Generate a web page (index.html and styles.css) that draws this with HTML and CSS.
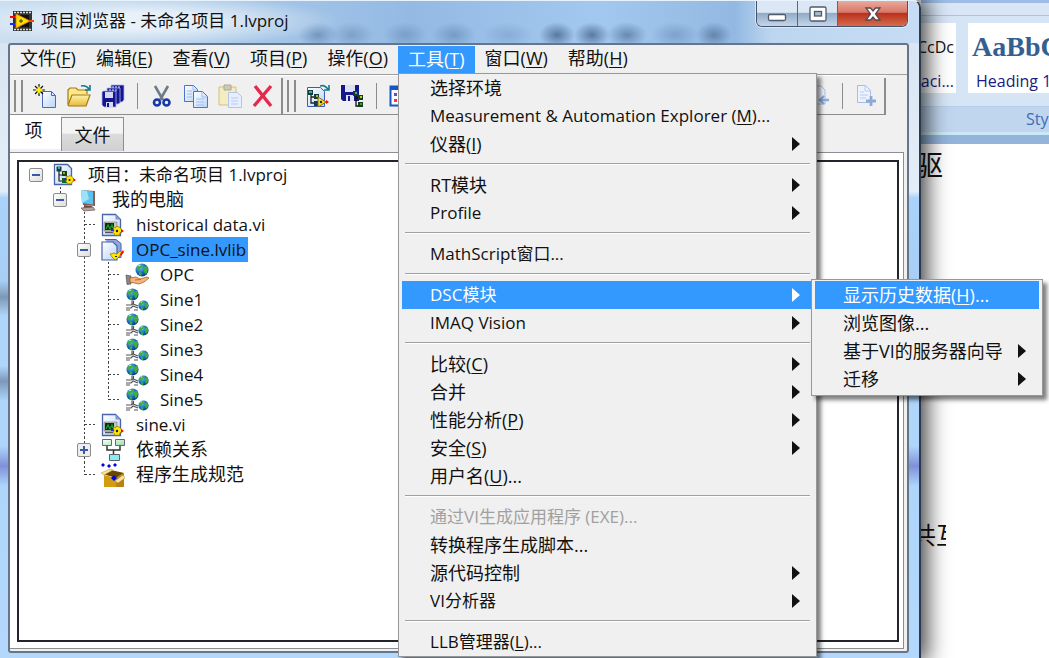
FILE: index.html
```html
<!DOCTYPE html>
<html lang="zh-CN">
<head>
<meta charset="utf-8">
<title>项目浏览器 - 未命名项目 1.lvproj</title>
<link rel="stylesheet" href="styles.css">
</head>
<body>
<svg class="defs" aria-hidden="true">
  <defs>
    <linearGradient id="page" x1="0" y1="0" x2="1" y2="1"><stop offset="0" stop-color="#fff"/><stop offset="1" stop-color="#b9d4f8"/></linearGradient>
    <linearGradient id="gold" x1="0" y1="0" x2="0" y2="1"><stop offset="0" stop-color="#fff3a8"/><stop offset="1" stop-color="#e8b83a"/></linearGradient>
    <radialGradient id="sea" cx=".35" cy=".3" r=".8"><stop offset="0" stop-color="#6cc4ee"/><stop offset=".6" stop-color="#0d62b4"/><stop offset="1" stop-color="#06336f"/></radialGradient>
    <linearGradient id="mint" x1="0" y1="0" x2="1" y2="1"><stop offset="0" stop-color="#fff"/><stop offset="1" stop-color="#8fe0a8"/></linearGradient>
    <symbol id="gear" viewBox="0 0 13 10"><path d="M0 3h3v2H0z" fill="#22f"/><path d="M2 1l3 .5L6 0l2 1 2 1.500 1 2.500-2 2-1 2.500-2-.5-2 .5-1-2-1-1 1-2z" fill="#ffe600" stroke="#8a7000" stroke-width=".7"/><circle cx="6" cy="5" r="1.200" fill="#222"/><path d="M10 3l3 2-3 2z" fill="#f00"/></symbol>
    <symbol id="globe" viewBox="0 0 14 14"><circle cx="7" cy="7" r="6.500" fill="url(#sea)"/><path d="M3 3l3-1.500 2 1-1 2-2 1v2L3 7 1.500 5zM9 4l3-1 1 3-1 4-2 1-1-3-1-2zM4 9l3 1-1 3-2-1z" fill="#3fae3d"/><path d="M3 2.500l2-1 1 1-2 1z" fill="#b8f0c0"/></symbol>
    <symbol id="sheet" viewBox="0 0 24 24"><path d="M3 2h13l5 5v16H3z" fill="url(#page)" stroke="#4a62a8" stroke-width="1.300"/><path d="M16 2v5h5z" fill="#dfeaff" stroke="#4a62a8"/></symbol>
    <symbol id="i-vi" viewBox="0 0 24 24"><path d="M1.500 1.500h13l5 5v16h-18z" fill="url(#page)" stroke="#4a62a8" stroke-width="1.300"/><path d="M14.500 1.500v5h5z" fill="#7f97d6"/><path d="M3 9h13v9H3z" fill="#c4c4c4" stroke="#777" stroke-width=".6"/><path d="M4 10h9v7H4z" fill="#031"/><path d="M5 16l2-4 2 4 2-4 1 3" fill="none" stroke="#1c9a2c" stroke-width="1.300"/><path d="M4 19.500h8" stroke="#555" stroke-width="1.500"/><use href="#gear" x="10" y="13" width="13" height="10"/></symbol>
    <symbol id="i-proj" viewBox="0 0 24 24"><path d="M1.500 1.500h13l4 4v16h-17z" fill="url(#page)" stroke="#4a62a8" stroke-width="1.300"/><path d="M6 7v11h5M6 12h4" fill="none" stroke="#222" stroke-width="1.200"/><path d="M3.500 3.500h5v5h-5z" fill="#163c3c"/><path d="M5 4h2v2H5z" fill="#29b6b6"/><path d="M9 8h5v5H9z" fill="#243c14"/><path d="M10 9h2v2h-2z" fill="#7ab32c"/><path d="M9 15h5v5H9z" fill="#162"/><use href="#gear" x="11" y="12" width="12" height="10"/></symbol>
    <symbol id="i-lib" viewBox="0 0 24 24"><path d="M4 1.500h11l5 4v14h-3" fill="#8fa5dc" stroke="#4a62a8"/><path d="M1 4h11l4 4v14H1z" fill="url(#page)" stroke="#4a62a8" stroke-width="1.200"/><path d="M9 16l4-1 3 1 3-3 2 2-4 5-3 2-3-3z" fill="#ffe600" stroke="#8a7000" stroke-width=".7"/><path d="M19 16l3-4 1 2-3 4z" fill="#f00"/><path d="M14 18h2v1h-2z" fill="#222"/></symbol>
    <symbol id="i-pc" viewBox="0 0 24 24"><path d="M4 2l14 1v15L6 17z" fill="#8a5d50"/><path d="M4 2l12 1.500v13L5 15z" fill="#57c3ee"/><path d="M4 2l6 1 2 8-7 4z" fill="#9ce2fa"/><path d="M7 17l8 1v2H7z" fill="#704a44"/><path d="M4 20l12-1 2 3-11 1z" fill="#b4a5a0" stroke="#6c5650" stroke-width=".7"/></symbol>
    <symbol id="i-hand" viewBox="0 0 24 24"><use href="#globe" x="10" y="0" width="14" height="14"/><path d="M1 12l5 1v8l-4 .5z" fill="#888" stroke="#444" stroke-width=".6"/><path d="M5 15l6-1 4 2 7-2 2 1-5 4-5 2-9-2z" fill="#f3b67e" stroke="#a85d22" stroke-width=".8"/><path d="M10 17l6-.5" stroke="#a85d22" stroke-width=".8"/></symbol>
    <symbol id="i-var" viewBox="0 0 24 24"><use href="#globe" x="1" y="0" width="13" height="13"/><path d="M7 13v3M8.500 13v3M1 17h5l2-1 5 2M1 20h5l2-2 5 2M1 22h4M9 22h4" fill="none" stroke="#555" stroke-width="1.200"/><use href="#globe" x="13" y="12" width="11" height="11"/></symbol>
    <symbol id="i-deps" viewBox="0 0 24 24"><path d="M6 8v4h13V8M12.500 12v4" fill="none" stroke="#333" stroke-width="1.500"/><path d="M1.500 1.500h9v6h-9zM14.500 1.500h9v6h-9z" fill="url(#mint)" stroke="#667"/><path d="M8.500 16.500h10v6h-10z" fill="#8cebf5" stroke="#566"/></symbol>
    <symbol id="i-build" viewBox="0 0 24 24"><path d="M2 11l8-4 13 3-8 5z" fill="#6b4800"/><path d="M3 12l12 3v9H3z" fill="#d29b16"/><path d="M15 15l8-5v14h-8z" fill="#b98210"/><path d="M0 10l9-4 3 1-9 5zM14 18l8-6 2 3-7 5z" fill="#fbe6a0" stroke="#b58a2a" stroke-width=".5"/><path d="M2 0l2 2-2 2-2-2zM8 1l2 2-2 2-2-2zM14 0l2 2-2 2-2-2zM13 12l3 3-3 3-3-3z" fill="#00e"/></symbol>
    <symbol id="i-new" viewBox="0 0 24 24"><path d="M9.500 7.500h9l4 4v12h-13z" fill="url(#page)" stroke="#4a6ac0"/><path d="M18.500 7.500v4h4" fill="none" stroke="#4a6ac0"/><path d="M6 0v12M0 6h12M2 2l8 8M10 2l-8 8" stroke="#111" stroke-width="1.200"/><path d="M6 2l1.500 2.500L10 6 7.500 7.500 6 10 4.500 7.500 2 6l2.500-1.500z" fill="#fff200"/></symbol>
    <symbol id="i-open" viewBox="0 0 24 24"><path d="M1 20V6l2-2h6l2 2h9v4" fill="#ffe88a" stroke="#a47a10" stroke-width="1.200"/><path d="M1 21l4-10h18l-4 11H2z" fill="url(#gold)" stroke="#a47a10" stroke-width="1.200"/><path d="M14 2c4-1 6 0 8 3M23 1v5h-5" fill="none" stroke="#147a8a" stroke-width="1.600"/></symbol>
    <symbol id="i-saveall" viewBox="0 0 24 24"><g stroke="#aab6ff" stroke-width=".8"><path d="M10 1h13v15l-2 2H10z" fill="#15158c"/><path d="M6 4h13v15l-2 1H6z" fill="#15158c"/><path d="M2 7h13v16H3l-2-2V8z" fill="#15158c"/></g><path d="M4 8h8v6H4zM5 18h7v5H5z" fill="#d3d9f2"/><path d="M6 19h2v4H6z" fill="#15158c"/><path d="M12 2v2M15 2v2M18 2v2M9 5v2M12 5v2M15 5v2" stroke="#dce2ff"/></symbol>
    <symbol id="i-cut" viewBox="0 0 24 24"><path d="M5 2l8 14M18 2l-8 14" stroke="#6f7b89" stroke-width="2.600"/><circle cx="7" cy="18.500" r="3" fill="none" stroke="#1738a8" stroke-width="2.600"/><circle cx="16.500" cy="18.500" r="3" fill="none" stroke="#1738a8" stroke-width="2.600"/></symbol>
    <symbol id="i-copy" viewBox="0 0 24 24"><g fill="url(#page)" stroke="#4a75cc"><path d="M.5 1.500h9l4 4v12H.5z"/><path d="M9.500 7.500h9l5 5v11h-14z"/></g><path d="M9 2v4h4M18 8v5h5M3 7h5M3 10h5M3 13h5M12 15h8M12 18h8M12 21h8" fill="none" stroke="#a2c0ee"/></symbol>
    <symbol id="i-paste" viewBox="0 0 24 24"><path d="M1 3h17v18H1z" fill="#f5edc2" stroke="#d4bf7c"/><path d="M6 1h7v5H6z" fill="#cfcab8" stroke="#aaa794"/><path d="M10.500 8.500h9l4 4v11h-13z" fill="#e5efff" stroke="#b5c4e4"/><path d="M13 14h7M13 17h7M13 20h7" stroke="#bccbe8"/></symbol>
    <symbol id="i-del" viewBox="0 0 24 24"><path d="M3 2l16 20M19 2L2 22" stroke="#e8284b" stroke-width="3.400"/></symbol>
    <symbol id="i-projgo" viewBox="0 0 24 24"><path d="M1.500 3.500h13l4 4v15h-17z" fill="url(#page)" stroke="#3c5bb8"/><path d="M5 8v11h6M5 13h5" fill="none" stroke="#222" stroke-width="1.300"/><path d="M2 6h5v5H2zM8 10h5v5H8zM8 17h5v5H8z" fill="#163c3c"/><path d="M3 7h3v2H3z" fill="#29b6b6"/><path d="M10 11h2v2h-2z" fill="#ab3"/><path d="M12 13l8 5-8 5z" fill="#ffe600" stroke="#765"/><circle cx="15" cy="18" r="1.200" fill="#222"/><path d="M20 16l3 2-3 2z" fill="#f00"/><path d="M14 2c4-1 5 0 8 3M23 1v5h-5" fill="none" stroke="#147a8a" stroke-width="1.600"/></symbol>
    <symbol id="i-saveproj" viewBox="0 0 24 24"><path d="M1 1h18v16H3l-2-2z" fill="#15158c"/><path d="M5 1h10v7H5zM6 11h8v6H6z" fill="#dce0f0"/><path d="M8 12h2v5H8z" fill="#15158c"/><path d="M16 9v13h4M16 14h4" fill="none" stroke="#111" stroke-width="1.300"/><path d="M13 7h5v5h-5zM18 11h5v5h-5zM18 18h5v5h-5z" fill="#1b3a1b"/><path d="M15 8h2v2h-2z" fill="#2bb"/><path d="M20 12h2v2h-2z" fill="#bc3"/><path d="M20 19h2v2h-2z" fill="#2a3"/></symbol>
    <symbol id="i-props" viewBox="0 0 24 24"><path d="M1.500 2.500h20v19h-20z" fill="#fff" stroke="#1656c8" stroke-width="2"/><path d="M1 2h21v4H1z" fill="#1656c8"/><path d="M5 9h3v3H5z" fill="#65a"/><path d="M5 15h3v3H5z" fill="#f33"/></symbol>
    <symbol id="i-in" viewBox="0 0 24 24"><path d="M6 2h9l4 4v14H6z" fill="#eef3fc" stroke="#a9bde2"/><path d="M23 16h-9M18 12l-4 4 4 4" fill="none" stroke="#8aaada" stroke-width="2.400"/></symbol>
    <symbol id="i-add" viewBox="0 0 24 24"><path d="M2.500 1.500h8l5 5v12h-13z" fill="#edf3fd" stroke="#a9bde2"/><path d="M10 2v5h5M5 8h4M5 11h8M5 14h6" fill="none" stroke="#b8cbea"/><path d="M16 12v10M11 17h10" stroke="#8caad8" stroke-width="2.800"/></symbol>
  </defs>
</svg>

<main class="desktop">
  <section class="window">
    <header class="titlebar">
      <svg class="app-icon" viewBox="0 0 24 22" aria-hidden="true"><path d="M3 1h19v20H3z" fill="#333"/><path d="M4 2.500h17M4 19.500h17" stroke="#ddd" stroke-width="1.500" stroke-dasharray="2 1"/><path d="M5 5h14v12H5z" fill="#111"/><path d="M0 7h6" stroke="#f00" stroke-width="2"/><path d="M0 14h6" stroke="#22f" stroke-width="2"/><path d="M6 4l14 7-14 7z" fill="#ffe100" stroke="#e58b00"/><path d="M9 11h4M11 9v4" stroke="#333"/><path d="M19 11h5" stroke="#f40" stroke-width="2"/></svg>
      <h1>项目浏览器 - 未命名项目 1.lvproj</h1>
      <div class="caption-buttons">
        <button class="cap min" aria-label="最小化"><svg viewBox="0 0 20 18"><rect x="1.500" y="9.500" width="17" height="6" rx="1.500" fill="#fff" stroke="#4e5b6e" stroke-width="1.300"/></svg></button>
        <button class="cap max" aria-label="最大化"><svg viewBox="0 0 20 18"><rect x="2" y="2" width="16" height="14" rx="1.500" fill="#fff" stroke="#4e5b6e" stroke-width="1.300"/><rect x="6.500" y="6.500" width="7" height="4.500" fill="#a9bcd0" stroke="#4e5b6e" stroke-width="1.300"/></svg></button>
        <button class="cap close" aria-label="关闭"><svg viewBox="0 0 20 18"><path d="M3 3h4.500l2.500 3 2.500-3H17l-4.500 6 4.500 6h-4.500L10 12l-2.500 3H3l4.500-6z" fill="#fff" stroke="#5a4a50" stroke-width="1.300"/></svg></button>
      </div>
    </header>

    <div class="client">
      <nav class="menubar">
        <button>文件(<u>F</u>)</button>
        <button>编辑(<u>E</u>)</button>
        <button>查看(<u>V</u>)</button>
        <button>项目(<u>P</u>)</button>
        <button>操作(<u>O</u>)</button>
        <div class="menu-host">
          <button class="open" aria-expanded="true">工具(<u>T</u>)</button>
          <div class="menu tools" role="menu">
            <button role="menuitem">选择环境</button>
            <button role="menuitem" class="latin">Measurement &amp; Automation Explorer (<u>M</u>)...</button>
            <button role="menuitem" class="more">仪器(<u>I</u>)</button>
            <hr>
            <button role="menuitem" class="more">RT模块</button>
            <button role="menuitem" class="more latin">Profile</button>
            <hr>
            <button role="menuitem" class="latin">MathScript窗口...</button>
            <hr>
            <div class="sub-host">
              <button role="menuitem" class="more active latin" aria-expanded="true">DSC模块</button>
              <div class="menu sub" role="menu">
                <button role="menuitem" class="active">显示历史数据(<u>H</u>)...</button>
                <button role="menuitem">浏览图像...</button>
                <button role="menuitem" class="more">基于VI的服务器向导</button>
                <button role="menuitem" class="more">迁移</button>
              </div>
            </div>
            <button role="menuitem" class="more latin">IMAQ Vision</button>
            <hr>
            <button role="menuitem" class="more">比较(<u>C</u>)</button>
            <button role="menuitem" class="more">合并</button>
            <button role="menuitem" class="more">性能分析(<u>P</u>)</button>
            <button role="menuitem" class="more">安全(<u>S</u>)</button>
            <button role="menuitem">用户名(<u>U</u>)...</button>
            <hr>
            <button role="menuitem" class="latin" disabled>通过VI生成应用程序 (EXE)...</button>
            <button role="menuitem">转换程序生成脚本...</button>
            <button role="menuitem" class="more">源代码控制</button>
            <button role="menuitem" class="more latin">VI分析器</button>
            <hr>
            <button role="menuitem" class="latin">LLB管理器(<u>L</u>)...</button>
          </div>
        </div>
        <button>窗口(<u>W</u>)</button>
        <button>帮助(<u>H</u>)</button>
      </nav>

      <div class="toolbars">
        <div class="toolbar">
          <i class="grip"></i>
          <button aria-label="新建"><svg><use href="#i-new"/></svg></button>
          <button aria-label="打开"><svg><use href="#i-open"/></svg></button>
          <button aria-label="全部保存"><svg><use href="#i-saveall"/></svg></button>
          <i class="sep"></i>
          <button aria-label="剪切"><svg><use href="#i-cut"/></svg></button>
          <button aria-label="复制"><svg><use href="#i-copy"/></svg></button>
          <button aria-label="粘贴" disabled><svg><use href="#i-paste"/></svg></button>
          <button aria-label="删除"><svg><use href="#i-del"/></svg></button>
        </div>
        <div class="toolbar wide">
          <i class="grip"></i>
          <button aria-label="打开项目"><svg><use href="#i-projgo"/></svg></button>
          <button aria-label="保存项目"><svg><use href="#i-saveproj"/></svg></button>
          <i class="sep"></i>
          <button aria-label="属性"><svg><use href="#i-props"/></svg></button>
          <span class="spring"></span>
          <button aria-label="移入" disabled><svg><use href="#i-in"/></svg></button>
          <i class="sep"></i>
          <button aria-label="添加" disabled><svg><use href="#i-add"/></svg></button>
        </div>
      </div>

      <div class="tabs" role="tablist">
        <button class="tab current" role="tab" aria-selected="true">项</button>
        <button class="tab" role="tab" aria-selected="false">文件</button>
      </div>

      <div class="tabpage">
        <div class="tree">
          <ul>
            <li>
              <div class="node"><button class="twist" aria-label="折叠"></button><svg><use href="#i-proj"/></svg><span class="latin">项目：未命名项目 1.lvproj</span></div>
              <ul>
                <li>
                  <div class="node"><button class="twist" aria-label="折叠"></button><svg><use href="#i-pc"/></svg><span>我的电脑</span></div>
                  <ul>
                    <li><div class="node"><i class="leaf"></i><svg><use href="#i-vi"/></svg><span class="latin">historical data.vi</span></div></li>
                    <li>
                      <div class="node"><button class="twist" aria-label="折叠"></button><svg><use href="#i-lib"/></svg><span class="latin selected">OPC_sine.lvlib</span></div>
                      <ul>
                        <li><div class="node"><i class="leaf"></i><svg><use href="#i-hand"/></svg><span class="latin">OPC</span></div></li>
                        <li><div class="node"><i class="leaf"></i><svg><use href="#i-var"/></svg><span class="latin">Sine1</span></div></li>
                        <li><div class="node"><i class="leaf"></i><svg><use href="#i-var"/></svg><span class="latin">Sine2</span></div></li>
                        <li><div class="node"><i class="leaf"></i><svg><use href="#i-var"/></svg><span class="latin">Sine3</span></div></li>
                        <li><div class="node"><i class="leaf"></i><svg><use href="#i-var"/></svg><span class="latin">Sine4</span></div></li>
                        <li><div class="node"><i class="leaf"></i><svg><use href="#i-var"/></svg><span class="latin">Sine5</span></div></li>
                      </ul>
                    </li>
                    <li><div class="node"><i class="leaf"></i><svg><use href="#i-vi"/></svg><span class="latin">sine.vi</span></div></li>
                    <li><div class="node"><button class="twist plus" aria-label="展开"></button><svg><use href="#i-deps"/></svg><span>依赖关系</span></div></li>
                    <li><div class="node"><i class="leaf"></i><svg><use href="#i-build"/></svg><span>程序生成规范</span></div></li>
                  </ul>
                </li>
              </ul>
            </li>
          </ul>
        </div>
      </div>
    </div>
  </section>

  <aside class="editor">
    <div class="ribbon-edge"></div>
    <div class="styles">
      <button class="style tail"><span class="sample">CcDc</span><span class="name">aci...</span></button>
      <button class="style"><span class="sample heading">AaBbC</span><span class="name">Heading 1</span></button>
    </div>
    <div class="group-name">Sty</div>
    <div class="ruler"></div>
    <div class="paper">
      <p class="first">驱</p>
      <p class="second">共互</p>
    </div>
  </aside>
</main>
</body>
</html>
```
FILE: styles.css
```css
* { box-sizing: border-box; }

body {
  margin: 0;
  overflow: hidden;
  font: 18px/28px "Open Sans", "Noto Sans CJK SC", sans-serif;
  color: #111;
}

button {
  margin: 0;
  padding: 0;
  border: 0;
  background: none;
  font: inherit;
  color: inherit;
}

ul { margin: 0; padding: 0; list-style: none; }
u { text-underline-offset: 2px; }
.defs { position: absolute; width: 0; height: 0; }
.latin { font-size: 17px; }

.desktop { display: flex; height: 100vh; background: #fff; }

/* Project window */
.window {
  position: relative;
  z-index: 1;
  flex: 1;
  min-width: 0;
  display: flex;
  flex-direction: column;
  padding: 0 10px 5px 8px;
  border-right: 2px solid #2b3a4c;
  border-top: 1px solid #e8f2fc;
  border-top-right-radius: 8px;
  box-shadow: 2px 0 22px 4px rgba(0, 0, 0, .75);
  background: linear-gradient(180deg, #d5e3f0 0, #e4eef8 190px, #a9d3fb 197px, #a8cef5 280px, #7d97b5 296px, #afd5fb 315px, #afd5fb 365px, #7c98ba 380px, #afd5fb 400px, #afd5fb 445px, #8090d8 465px, #afd5fb 485px, #b4d8fc 100%);
}

.titlebar {
  display: flex;
  align-items: flex-start;
  height: 42px;
  margin: 0 -10px 0 -8px;
  padding: 0 11px 0 10px;
  border-top-right-radius: 7px;
  background:
    radial-gradient(ellipse 190px 26px at 150px 20px, #ffffffb0 30%, #ffffff00),
    radial-gradient(ellipse 20px 13px at 318px 34px, #4f739f88, #4f739f00),
    radial-gradient(ellipse 22px 13px at 352px 34px, #4f739f66, #4f739f00),
    radial-gradient(ellipse 22px 13px at 405px 34px, #4f739f66, #4f739f00),
    radial-gradient(ellipse 22px 13px at 454px 34px, #4f739f77, #4f739f00),
    radial-gradient(ellipse 26px 13px at 508px 34px, #4f739f44, #4f739f00),
    radial-gradient(ellipse 18px 13px at 557px 34px, #29456f99, #29456f00),
    radial-gradient(ellipse 18px 13px at 592px 34px, #29456f99, #29456f00),
    radial-gradient(ellipse 20px 13px at 627px 34px, #29456f77, #29456f00),
    radial-gradient(ellipse 24px 13px at 675px 34px, #4f739f66, #4f739f00),
    radial-gradient(ellipse 18px 13px at 714px 34px, #29456f77, #29456f00),
    linear-gradient(90deg, #ccdff0 0, #a8c8e8 25%, #94bae4 45%, #a3c8ef 65%, #93b9e2 80%, #bdd6f0 84%, #c5dcf4 100%);
}

.app-icon { width: 24px; height: 22px; margin-top: 9px; }

h1 {
  flex: 1;
  margin: 6px 0 0 7px;
  font-size: 17px;
  font-weight: 400;
  line-height: 28px;
  white-space: nowrap;
}

.caption-buttons {
  display: flex;
  height: 26px;
  border: 1px solid #47536a;
  border-top: 0;
  border-radius: 0 0 6px 6px;
  overflow: hidden;
  box-shadow: 0 0 0 1px #e8f3ffaa;
}

.cap { display: grid; place-items: center; width: 40px; background: linear-gradient(#dbe7f4 45%, #93abc8 50%, #c3d6ea); }
.cap + .cap { border-left: 1px solid #59677c; }
.cap svg { width: 20px; height: 18px; }
.cap.close { width: 70px; background: linear-gradient(#e9ab9b 0, #d9776a 45%, #b9321d 50%, #d66b4d); }

.client {
  flex: 1;
  display: flex;
  flex-direction: column;
  border: 2px solid #65758a;
  border-radius: 3px;
  background: #f0f0f0;
}

.menubar { display: flex; height: 30px; border-bottom: 1px solid #a0a0a0; }
.menubar > button, .menu-host > button { height: 29px; padding: 0 10px 3px; line-height: 26px; white-space: nowrap; }
.menu-host { position: relative; }
.menu-host > .open { background: #3399ff; color: #fff; }

.menu {
  position: absolute;
  z-index: 2;
  padding: 0 3px;
  border: 1px solid #979797;
  background: #f0f0f0;
  box-shadow: 4px 4px 4px rgba(0, 0, 0, .5);
}

.menu button {
  display: block;
  width: 100%;
  height: 28px;
  padding: 0 28px;
  line-height: 28px;
  text-align: left;
  white-space: nowrap;
}

.menu hr { height: 2px; margin: 5px 3px 6px; border: 0; border-top: 1px solid #a0a0a0; border-bottom: 1px solid #fff; }
.menu .more { position: relative; }

.menu .more::after {
  content: "";
  position: absolute;
  top: 7px;
  right: 13px;
  border: 7px solid transparent;
  border-left: 8px solid currentColor;
  border-right: 0;
}

.menu .active { background: #3399ff; color: #fff; }
.menu button:disabled { color: #a0a0a0; }
.tools { top: 28px; left: 0; width: 419px; }
.sub-host { position: relative; }
.sub { top: -2px; left: 409px; width: 232px; padding: 1px 3px 2px; }

.toolbars { display: flex; height: 40px; border-top: 1px solid #fff; border-bottom: 1px solid #8c8c8c; margin-right: 21px; padding-top: 2px; }
.toolbar { display: flex; align-items: center; border-right: 2px solid #8c8c8c; }
.toolbar button { display: grid; place-items: center; width: 34px; height: 34px; }
.toolbar svg { width: 24px; height: 24px; }
.toolbar .grip { flex: none; }
.wide { flex: 1; }
.spring { flex: 1; }
.grip { width: 9px; height: 32px; margin: 0 5px 0 4px; border: solid #8c8c8c; border-width: 0 2px; }
.sep { width: 1px; height: 26px; margin: 0 7px; background: #8c8c8c; }

.tabs { display: flex; align-items: flex-end; height: 37px; padding-bottom: 1px; }
.tab { height: 34px; width: 63px; border: 1px solid #8a8f96; border-bottom: 0; background: linear-gradient(#f4f4f4 45%, #dcdcdc 50%, #d0d0d0); }
.tab.current { align-self: stretch; width: 51px; margin-bottom: -2px; padding: 0 4px 5px 0; border: 0; background: #fff; }

.tabpage { flex: 1; display: flex; padding: 7px 4px 6px 7px; border-top: 1px solid #8a8f96; border-right: 1px solid #8a8f96; border-bottom: 1px solid #8a8f96; background: #fff; margin: 0 3px 2px 0; }
.tree { flex: 1; border: 2px solid #22262c; background: #fff; padding-left: 9px; }

.tree ul ul { padding-left: 24px; }
.tree li { position: relative; }

.tree li::before {
  content: "";
  position: absolute;
  top: 0;
  bottom: 0;
  left: 8px;
  width: 1px;
  background: repeating-linear-gradient(#444 0 2px, #fff 2px 4px);
}

.tree > ul > li::before { display: none; }
.tree li:last-child::before { bottom: auto; height: 13px; }
.node { position: relative; display: flex; align-items: center; height: 25px; white-space: nowrap; }
.node svg { width: 24px; height: 24px; margin: 0 7px 0 9px; }
.node span { padding: 0 2px 0 4px; line-height: 25px; }
.node .selected { background: #3399ff; }
.leaf { width: 20px; height: 1px; margin-right: -4px; background: repeating-linear-gradient(90deg, #444 0 2px, #fff 2px 4px) 9px 0 / 11px 1px no-repeat; }

.twist {
  width: 14px;
  height: 14px;
  margin: 0 1px;
  border: 1px solid #8c8c8c;
  border-radius: 2px;
  background: linear-gradient(#3a58a8, #3a58a8) center / 8px 2px no-repeat, linear-gradient(135deg, #fff, #ddd);
}

.twist.plus { background: linear-gradient(#3a58a8, #3a58a8) center / 8px 2px no-repeat, linear-gradient(#3a58a8, #3a58a8) center / 2px 8px no-repeat, #eee; }

/* Document editor behind the window */
.editor { width: 128px; display: flex; flex-direction: column; overflow: hidden; background: #d6e5f5; font-size: 17px; }
.ribbon-edge { height: 16px; background: linear-gradient(#9dbde4 0 3px, #d9e6f5 3px); border-bottom: 1px solid #a8c4e6; }
.styles { display: flex; gap: 12px; height: 91px; padding: 7px 0 14px; border-bottom: 1px solid #b5cdea; }
.style { display: flex; flex-direction: column; flex: none; height: 70px; padding: 4px 7px 0 4px; background: #fff; text-align: left; white-space: nowrap; }
.style.tail { width: 35px; padding: 4px 2px 0 0; align-items: flex-end; }
.sample { height: 40px; line-height: 40px; font-size: 16px; }
.heading { font: 700 28px/40px "Liberation Serif", serif; color: #365f91; }
.style .name { padding-left: 4px; color: #1b1b80; font-size: 16px; line-height: 28px; }
.group-name { height: 25px; padding-left: 105px; background: #c0d6ef; color: #3e6db5; font-size: 16px; line-height: 25px; }
.ruler { height: 12px; border-top: 3px solid #c9eaf4; background: #94b4dc; }
.paper { flex: 1; background: #fff; font-family: "Noto Sans CJK SC", sans-serif; white-space: nowrap; }
.paper p { margin: 0; overflow: hidden; }
.paper .first { height: 370px; padding-top: 2px; font-size: 28px; line-height: 36px; text-indent: -6px; }
.paper .second { width: 25px; font-size: 24px; line-height: 40px; text-indent: -9px; }
```
